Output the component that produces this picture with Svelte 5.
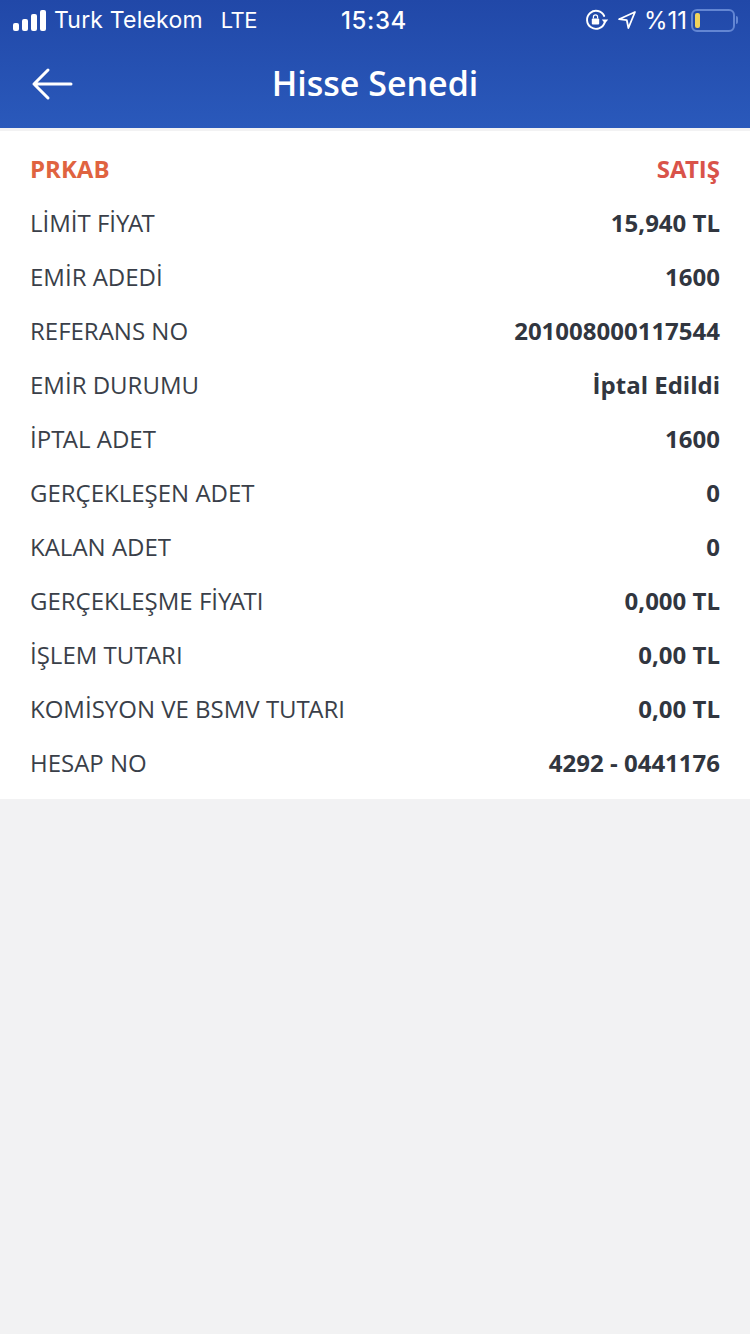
<script lang="ts">
  const rows = [
    ["LİMİT FİYAT", "15,940 TL"],
    ["EMİR ADEDİ", "1600"],
    ["REFERANS NO", "201008000117544"],
    ["EMİR DURUMU", "İptal Edildi"],
    ["İPTAL ADET", "1600"],
    ["GERÇEKLEŞEN ADET", "0"],
    ["KALAN ADET", "0"],
    ["GERÇEKLEŞME FİYATI", "0,000 TL"],
    ["İŞLEM TUTARI", "0,00 TL"],
    ["KOMİSYON VE BSMV TUTARI", "0,00 TL"],
    ["HESAP NO", "4292 - 0441176"],
  ];

  // installed Open Sans has no kerning for these pairs, so tighten them by hand
  const pairs = (text: string) => text.split(/(T(?=A)|Y(?=A)|A(?=T))/);
</script>

<div class="page">
  <header class="top">
    <div class="status">
      <div class="status-left">
        <div class="signal">
          <span class="b1"></span><span class="b2"></span><span class="b3"></span><span class="b4"></span>
        </div>
        <span class="carrier">Turk Telekom</span>
        <span class="net">LTE</span>
      </div>
      <span class="clock">15:34</span>
      <div class="status-right">
        <svg class="lock" width="24" height="22" viewBox="0 0 24 22" fill="none">
          <path d="M19.600 13.600A9 9 0 1 1 19.200 7" stroke="#fff" stroke-width="1.900" stroke-linecap="round" />
          <path d="M16.800 10.600h6.400l-3.200 3.800z" fill="#fff" />
          <rect x="6.800" y="9.600" width="7.400" height="5.800" rx="1" fill="#fff" />
          <path d="M8.400 9.600V8a2.100 2.100 0 0 1 4.200 0v1.600" stroke="#fff" stroke-width="1.200" />
        </svg>
        <svg class="arrow" width="20" height="20" viewBox="0 0 20 20" fill="none">
          <path d="M18 2 2 9.200l7.800 1 1.600 7.800z" stroke="#fff" stroke-width="1.800" stroke-linejoin="round" />
        </svg>
        <span class="pct">%11</span>
        <div class="battery">
          <div class="cell"><span class="level"></span></div>
          <span class="nub"></span>
        </div>
      </div>
    </div>
    <div class="nav">
      <svg class="back" width="44" height="34" viewBox="0 0 44 34" fill="none">
        <path d="M40 17H3M17 3 3 17l14 14" stroke="#fff" stroke-width="3" stroke-linecap="round" stroke-linejoin="round" />
      </svg>
      <h1>Hisse Senedi</h1>
    </div>
  </header>

  <section class="card">
    <div class="row head">
      <span class="code">PRKAB</span>
      <strong class="side">S<span class="kern">A</span>TIŞ</strong>
    </div>
    {#each rows as [label, value]}
      <div class="row">
        <span>{#each pairs(label) as part, i}{#if i % 2}<span class="kern">{part}</span>{:else}{part}{/if}{/each}</span>
        <strong>{value}</strong>
      </div>
    {/each}
  </section>
</div>

<style>
  :global(body) {
    margin: 0;
    background: #f2f2f3;
  }

  .page {
    min-height: 1334px;
    background: #f2f2f3;
    font-family: "Open Sans", sans-serif;
  }

  .top {
    height: 128px;
    background: linear-gradient(180deg, #2148a8 0%, #2a59bb 100%);
    color: #fff;
    display: flex;
    flex-direction: column;
  }

  .status {
    height: 40px;
    display: grid;
    grid-template-columns: 1fr auto 1fr;
    align-items: center;
    padding: 0 13px;
    font-family: Inter, sans-serif;
    font-size: 23px;
  }

  .status-left,
  .status-right {
    display: flex;
    align-items: center;
  }

  .status-right {
    justify-content: flex-end;
  }

  .signal {
    display: flex;
    align-items: flex-end;
    gap: 3px;
    height: 22px;
    margin-right: 8px;
  }

  .signal span {
    width: 6px;
    background: #fff;
    border-radius: 2px;
  }

  .b1 { height: 8px; }
  .b2 { height: 12px; }
  .b3 { height: 17px; }
  .b4 { height: 21px; }

  .carrier {
    letter-spacing: 0.2px;
  }

  .net {
    margin-left: 18px;
    font-size: 22px;
    letter-spacing: -0.5px;
  }

  .clock {
    font-size: 24px;
    font-weight: 500;
    letter-spacing: 0.6px;
    margin-left: -2px;
  }

  .lock {
    margin-right: 8px;
  }

  .arrow {
    margin-right: 7px;
  }

  .pct {
    margin-right: 4px;
    font-size: 24px;
  }

  .battery {
    display: flex;
    align-items: center;
    margin-right: -1px;
  }

  .cell {
    width: 44px;
    height: 23px;
    box-sizing: border-box;
    border: 2px solid #6386d3;
    border-radius: 6px;
    padding: 2px 2px;
  }

  .level {
    display: block;
    width: 5px;
    height: 100%;
    background: #f0d35c;
    border-radius: 2px;
  }

  .nub {
    width: 2px;
    height: 8px;
    margin-left: 1px;
    background: #6386d3;
    border-radius: 0 2px 2px 0;
  }

  .nav {
    position: relative;
    flex: 1;
    display: flex;
    align-items: center;
    justify-content: center;
  }

  .back {
    position: absolute;
    left: 31px;
    top: 27px;
  }

  h1 {
    margin: 0 0 2px;
    font-size: 34px;
    font-weight: 600;
    line-height: 1;
  }

  .card {
    margin-top: 3px;
    padding: 10px 30px 10px;
    background: #fff;
  }

  .row {
    height: 54px;
    display: flex;
    align-items: center;
    justify-content: space-between;
    font-size: 24px;
    color: #3a3f49;
  }

  .row strong {
    font-weight: 700;
    color: #31363f;
  }

  .kern {
    letter-spacing: -1.6px;
  }

  .row .code {
    font-weight: 700;
    color: #e06340;
  }

  .row .side {
    color: #d9534a;
  }
</style>
